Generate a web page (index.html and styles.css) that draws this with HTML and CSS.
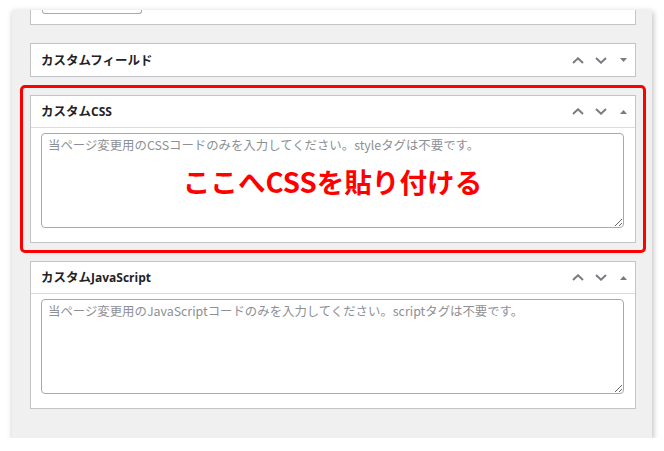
FILE: index.html
```html
<!DOCTYPE html>
<html lang="ja">
<head>
<meta charset="utf-8">
<title>カスタムCSS</title>
<link rel="stylesheet" href="styles.css">
</head>
<body>
<div class="panel">
  <div class="stub"><div class="stub-btn"></div></div>

  <div class="postbox closed">
    <div class="postbox-header">
      <h2 class="title">カスタムフィールド</h2>
      <div class="actions">
        <span class="act"><svg width="12" height="7" viewBox="0 0 12 7"><polyline points="1,6 6,1.3 11,6" /></svg></span>
        <span class="act"><svg width="12" height="7" viewBox="0 0 12 7"><polyline points="1,1 6,5.7 11,1" /></svg></span>
        <span class="act"><svg class="tri" width="7" height="4" viewBox="0 0 7 4"><polygon points="0,0 7,0 3.5,4" /></svg></span>
      </div>
    </div>
  </div>

  <div class="postbox">
    <div class="postbox-header">
      <h2 class="title">カスタム<span class="lat">CSS</span></h2>
      <div class="actions">
        <span class="act"><svg width="12" height="7" viewBox="0 0 12 7"><polyline points="1,6 6,1.3 11,6" /></svg></span>
        <span class="act"><svg width="12" height="7" viewBox="0 0 12 7"><polyline points="1,1 6,5.7 11,1" /></svg></span>
        <span class="act"><svg class="tri" width="7" height="4" viewBox="0 0 7 4"><polygon points="0,4 7,4 3.5,0" /></svg></span>
      </div>
    </div>
    <div class="inside">
      <div class="field">
        <textarea class="code" placeholder="当ページ変更用のCSSコードのみを入力してください。styleタグは不要です。"></textarea>
        <div class="note">ここへCSSを貼り付ける</div>
      </div>
    </div>
  </div>

  <div class="postbox">
    <div class="postbox-header">
      <h2 class="title">カスタム<span class="lat">JavaScript</span></h2>
      <div class="actions">
        <span class="act"><svg width="12" height="7" viewBox="0 0 12 7"><polyline points="1,6 6,1.3 11,6" /></svg></span>
        <span class="act"><svg width="12" height="7" viewBox="0 0 12 7"><polyline points="1,1 6,5.7 11,1" /></svg></span>
        <span class="act"><svg class="tri" width="7" height="4" viewBox="0 0 7 4"><polygon points="0,4 7,4 3.5,0" /></svg></span>
      </div>
    </div>
    <div class="inside">
      <div class="field">
        <textarea class="code" placeholder="当ページ変更用のJavaScriptコードのみを入力してください。scriptタグは不要です。"></textarea>
      </div>
    </div>
  </div>

  <div class="highlight"></div>
</div>
</body>
</html>
```

FILE: styles.css
```css
* { box-sizing: border-box; }
html, body { margin: 0; padding: 0; background: #ffffff; }
body {
  font-family: "Noto Sans CJK JP", sans-serif;
  color: #1d2327;
}
.panel {
  position: relative;
  margin: 10px 0 0 12px;
  width: 640px;
  height: 428px;
  background: #f0f0f1;
  padding: 0 16px 0 18px;
  overflow: hidden;
  box-shadow: 1px 2px 6px rgba(0, 0, 0, 0.28);
  display: flex;
  flex-direction: column;
  gap: 18px;
}
.stub {
  height: 15px;
  background: #fff;
  border: 1px solid #c3c4c7;
  border-top: 0;
  padding-left: 11px;
  flex: none;
}
.stub-btn {
  width: 100px;
  height: 4px;
  border: 1px solid #a7aaad;
  border-top: 0;
  border-radius: 0 0 3px 3px;
}
.postbox {
  background: #fff;
  border: 1px solid #c3c4c7;
  flex: none;
}
.postbox-header {
  height: 32px;
  display: flex;
  align-items: center;
  justify-content: space-between;
  border-bottom: 1px solid #dcdcde;
  padding-left: 10px;
}
.closed .postbox-header { border-bottom: 0; }
.title {
  margin: 0;
  font-size: 12.5px;
  font-weight: 700;
  line-height: 1;
  letter-spacing: 0;
}
.lat {
  font-family: "Open Sans", "Noto Sans CJK JP", sans-serif;
  font-weight: 700;
  font-size: 12px;
}
.actions { display: flex; height: 100%; }
.act {
  width: 23px;
  height: 100%;
  display: flex;
  align-items: center;
  justify-content: center;
}
.act svg polyline {
  fill: none;
  stroke: #787c82;
  stroke-width: 2;
  stroke-linecap: butt;
  stroke-linejoin: miter;
}
.act svg polygon { fill: #787c82; }
.inside {
  padding: 5px 11px 14px 10px;
}
.field { position: relative; }
.code {
  display: block;
  width: 100%;
  height: 95px;
  margin: 0;
  border: 1px solid #a7aaad;
  border-radius: 4px;
  padding: 2px 6px;
  font-family: "Noto Sans CJK JP", sans-serif;
  font-size: 12.4px;
  line-height: 18px;
  color: #2c3338;
  background: #fff;
  resize: vertical;
}
.code::placeholder { color: #8c8f94; opacity: 1; }
.note {
  position: absolute;
  inset: 0;
  display: flex;
  align-items: center;
  justify-content: center;
  color: #ff0000;
  font-size: 27.6px;
  font-weight: 700;
  letter-spacing: 0;
  pointer-events: none;
}
.highlight {
  position: absolute;
  left: 8px;
  top: 75px;
  width: 626px;
  height: 168px;
  border: 3px solid #ff0000;
  border-radius: 5px;
  pointer-events: none;
}
```
